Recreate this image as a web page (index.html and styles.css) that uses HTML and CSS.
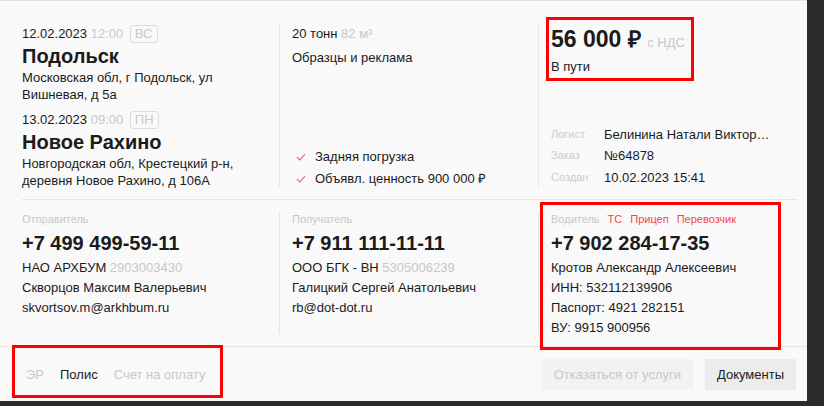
FILE: index.html
```html
<!DOCTYPE html>
<html lang="ru">
<head>
    <meta charset="utf-8" />
    <meta name="viewport" content="width=device-width, initial-scale=1" />
    <title>Заказ №64878</title>
    <link rel="stylesheet" href="styles.css">
</head>
<body>

<div class="card">
    <div class="section top">
        <div class="col route">
            <div class="date-row">12.02.2023 <span class="muted">12:00</span> <span class="day">ВС</span></div>
            <div class="city">Подольск</div>
            <div class="address">Московская обл, г Подольск, ул Вишневая, д 5а</div>

            <div class="date-row second">13.02.2023 <span class="muted">09:00</span> <span class="day">ПН</span></div>
            <div class="city">Новое Рахино</div>
            <div class="address">Новгородская обл, Крестецкий р-н, деревня Новое Рахино, д 106А</div>
        </div>

        <div class="col cargo">
            <div class="line">20 тонн <span class="muted">82 м³</span></div>
            <div class="line cargo-name">Образцы и реклама</div>
            <ul class="checks">
                <li>
                    <svg class="check" width="10" height="8" viewBox="0 0 10 8"><polyline points="1,4 3.8,6.8 9,1.2" fill="none" stroke="#ea6b6f" stroke-width="1.2"/></svg>
                    Задняя погрузка
                </li>
                <li>
                    <svg class="check" width="10" height="8" viewBox="0 0 10 8"><polyline points="1,4 3.8,6.8 9,1.2" fill="none" stroke="#ea6b6f" stroke-width="1.2"/></svg>
                    Объявл. ценность 900 000 ₽
                </li>
            </ul>
        </div>

        <div class="col summary">
            <div class="price">56 000 ₽ <span class="vat">с НДС</span></div>
            <div class="status">В пути</div>
            <div class="info">
                <div class="info-row"><span class="info-label">Логист</span><span class="info-value">Белинина Натали Виктор…</span></div>
                <div class="info-row"><span class="info-label">Заказ</span><span class="info-value">№64878</span></div>
                <div class="info-row"><span class="info-label">Создан</span><span class="info-value">10.02.2023 15:41</span></div>
            </div>
        </div>
    </div>

    <div class="section contacts">
        <div class="col">
            <div class="label">Отправитель</div>
            <div class="phone">+7 499 499-59-11</div>
            <div class="details">
                <div>НАО АРХБУМ <span class="muted">2903003430</span></div>
                <div>Скворцов Максим Валерьевич</div>
                <div>skvortsov.m@arkhbum.ru</div>
            </div>
        </div>
        <div class="col">
            <div class="label">Получатель</div>
            <div class="phone">+7 911 111-11-11</div>
            <div class="details">
                <div>ООО БГК - ВН <span class="muted">5305006239</span></div>
                <div>Галицкий Сергей Анатольевич</div>
                <div>rb@dot-dot.ru</div>
            </div>
        </div>
        <div class="col">
            <div class="label tabs">
                <span>Водитель</span>
                <a class="tab">ТС</a>
                <a class="tab">Прицеп</a>
                <a class="tab">Перевозчик</a>
            </div>
            <div class="phone">+7 902 284-17-35</div>
            <div class="details">
                <div>Кротов Александр Алексеевич</div>
                <div>ИНН: 532112139906</div>
                <div>Паспорт: 4921 282151</div>
                <div>ВУ: 9915 900956</div>
            </div>
        </div>
    </div>

    <div class="footer">
        <div class="doc-links">
            <a class="doc-link">ЭР</a>
            <a class="doc-link active">Полис</a>
            <a class="doc-link">Счет на оплату</a>
        </div>
        <div class="actions">
            <button class="btn disabled">Отказаться от услуги</button>
            <button class="btn">Документы</button>
        </div>
    </div>

    <!-- highlight frames -->
    <div class="mark mark-price"></div>
    <div class="mark mark-driver"></div>
    <div class="mark mark-docs"></div>
</div>

</body>
</html>
```

FILE: styles.css
```css
* {
    margin: 0;
    padding: 0;
    box-sizing: border-box;
}

html, body {
    width: 100%;
    height: 100%;
}

body {
    overflow: hidden;
    background-color: #2b2b2b;
    font-family: "Liberation Sans", Arial, sans-serif;
    font-size: 13px;
    color: #1b1b1b;
}

.card {
    position: relative;
    width: 807px;
    height: 401px;
    background-color: #f9f9f9;
    border-top: 1px solid #e3e3e3;
    display: flex;
    flex-direction: column;
}

.muted {
    color: #c8c8c8;
}

.section {
    display: grid;
    grid-template-columns: 257px 259px 1fr;
    margin: 0 10px 0 22px;
}

.col + .col {
    border-left: 1px solid #e6e6e6;
    padding-left: 12px;
}

.top {
    padding: 24px 0 12px;
    border-bottom: 1px solid #e6e6e6;
}

.top .col {
    height: 162px;
}

/* route */
.date-row {
    line-height: 18px;
}

.date-row.second {
    margin-top: 8px;
}

.day {
    display: inline-block;
    margin-left: 3px;
    padding: 0 4px;
    line-height: 16px;
    border: 1px solid #dcdcdc;
    border-radius: 3px;
    color: #c8c8c8;
}

.city {
    font-size: 20px;
    font-weight: bold;
    line-height: 26px;
}

.address {
    line-height: 17px;
    padding-right: 12px;
}

/* cargo */
.cargo {
    display: flex;
    flex-direction: column;
}

.line {
    line-height: 18px;
}

.cargo-name {
    margin-top: 6px;
}

.checks {
    list-style: none;
    margin-top: auto;
    margin-bottom: -3px;
}

.checks li {
    display: flex;
    align-items: center;
    line-height: 22px;
}

.check {
    margin: 0 9px 0 4px;
}

/* summary */
.summary {
    display: flex;
    flex-direction: column;
}

.price {
    font-size: 23px;
    font-weight: bold;
    line-height: 28px;
}

.vat {
    font-size: 13px;
    font-weight: normal;
    color: #c8c8c8;
}

.status {
    margin-top: 1px;
    line-height: 18px;
}

.info {
    margin-top: auto;
    margin-bottom: -1px;
}

.info-row {
    display: flex;
    line-height: 21.5px;
}

.info-label {
    width: 53px;
    flex-shrink: 0;
    font-size: 11px;
    color: #cbcbcb;
}

.info-value {
    white-space: nowrap;
}

/* contacts */
.contacts {
    padding: 12px 0;
}

.contacts .col {
    height: 122px;
}

.label {
    font-size: 11px;
    line-height: 14px;
    color: #c8c8c8;
}

.tabs {
    display: flex;
    gap: 8px;
}

.tab {
    color: #f04650;
    cursor: pointer;
}

.phone {
    margin-top: 4px;
    font-size: 20px;
    font-weight: bold;
    line-height: 26px;
}

.details {
    margin-top: 2px;
    line-height: 20px;
}

/* footer */
.footer {
    display: flex;
    align-items: center;
    justify-content: space-between;
    border-top: 1px solid #e6e6e6;
    padding: 12px 11px 11px 26px;
}

.doc-links {
    display: flex;
    gap: 16px;
}

.doc-link {
    color: #c8c8c8;
    cursor: pointer;
}

.doc-link.active {
    color: #1b1b1b;
}

.actions {
    display: flex;
    gap: 12px;
}

.btn {
    height: 31px;
    padding: 0 12px;
    border: none;
    background-color: #ececec;
    font-family: inherit;
    font-size: 13px;
    color: #1b1b1b;
}

.btn.disabled {
    background-color: #f2f2f2;
    color: #c8c8c8;
}

/* red highlight frames drawn over the card */
.mark {
    position: absolute;
    border: 3px solid #ff0000;
    pointer-events: none;
}

.mark-price {
    left: 546px;
    top: 16px;
    width: 148px;
    height: 64px;
}

.mark-driver {
    left: 540px;
    top: 201px;
    width: 241px;
    height: 148px;
}

.mark-docs {
    left: 12px;
    top: 344px;
    width: 211px;
    height: 53px;
}
```
